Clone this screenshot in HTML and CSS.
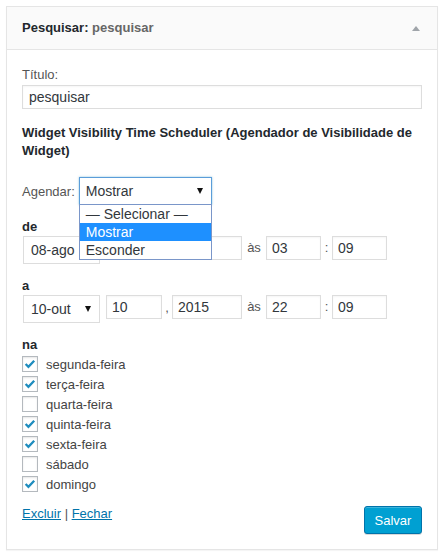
FILE: index.html
```html
<!DOCTYPE html>
<html lang="pt-BR">
<head>
<meta charset="utf-8">
<title>Widget</title>
<link rel="stylesheet" href="styles.css">
</head>
<body>
<div class="widget">
  <div class="widget-top">
    <h3 class="widget-title">Pesquisar:<span class="in-title"> pesquisar</span></h3>
    <span class="toggle"></span>
  </div>
  <div class="widget-inside">
    <label class="field-label">Título:</label>
    <input class="text-input wide" type="text" value="pesquisar">
    <h4 class="section-title">Widget Visibility Time Scheduler (Agendador de Visibilidade de Widget)</h4>

    <div class="schedule-row">
      <span class="muted-label">Agendar:</span>
      <div class="select-wrap">
        <div class="fake-select focused">Mostrar<span class="arrow"></span></div>
        <ul class="dropdown">
          <li>— Selecionar —</li>
          <li class="active">Mostrar</li>
          <li>Esconder</li>
        </ul>
      </div>
    </div>

    <div class="group-label">de</div>
    <div class="date-row">
      <div class="fake-select date-select">08-ago<span class="arrow"></span></div>
      <input class="text-input day" type="text" value="">
      <span class="sep comma">,</span>
      <input class="text-input year" type="text" value="">
      <span class="sep at">às</span>
      <input class="text-input time" type="text" value="03">
      <span class="sep colon">:</span>
      <input class="text-input time" type="text" value="09">
    </div>

    <div class="group-label">a</div>
    <div class="date-row">
      <div class="fake-select date-select">10-out<span class="arrow"></span></div>
      <input class="text-input day" type="text" value="10">
      <span class="sep comma">,</span>
      <input class="text-input year" type="text" value="2015">
      <span class="sep at">às</span>
      <input class="text-input time" type="text" value="22">
      <span class="sep colon">:</span>
      <input class="text-input time" type="text" value="09">
    </div>

    <div class="group-label">na</div>
    <ul class="days">
      <li><span class="cb checked"><svg viewBox="0 0 16 16"><polyline points="3,8 6.2,11.3 12.8,4.2"/></svg></span>segunda-feira</li>
      <li><span class="cb checked"><svg viewBox="0 0 16 16"><polyline points="3,8 6.2,11.3 12.8,4.2"/></svg></span>terça-feira</li>
      <li><span class="cb"></span>quarta-feira</li>
      <li><span class="cb checked"><svg viewBox="0 0 16 16"><polyline points="3,8 6.2,11.3 12.8,4.2"/></svg></span>quinta-feira</li>
      <li><span class="cb checked"><svg viewBox="0 0 16 16"><polyline points="3,8 6.2,11.3 12.8,4.2"/></svg></span>sexta-feira</li>
      <li><span class="cb"></span>sábado</li>
      <li><span class="cb checked"><svg viewBox="0 0 16 16"><polyline points="3,8 6.2,11.3 12.8,4.2"/></svg></span>domingo</li>
    </ul>

    <div class="widget-footer">
      <div class="links"><a href="#">Excluir</a> | <a href="#">Fechar</a></div>
      <button class="button-primary" type="button">Salvar</button>
    </div>
  </div>
</div>
</body>
</html>
```

FILE: styles.css
```css
html, body {
  margin: 0;
  background: #fff;
}
body {
  padding: 6px;
  font-family: "Liberation Sans", Arial, sans-serif;
  font-size: 13px;
  color: #444;
}
.widget {
  border: 1px solid #e5e5e5;
  background: #fff;
  box-shadow: 0 1px 1px rgba(0,0,0,.04);
}
.widget-top {
  height: 42px;
  background: #fafafa;
  border-bottom: 1px solid #e5e5e5;
  display: flex;
  align-items: center;
  justify-content: space-between;
  padding: 0 17px 0 15px;
}
.widget-title {
  margin: 0;
  font-size: 13px;
  font-weight: bold;
  color: #23282d;
  line-height: 16px;
}
.in-title {
  color: #666;
}
.toggle {
  width: 0;
  height: 0;
  border-left: 4px solid transparent;
  border-right: 4px solid transparent;
  border-bottom: 5px solid #a0a5aa;
}
.widget-inside {
  padding: 17px 15px 15px;
}
.field-label {
  display: block;
  line-height: 16px;
  color: #555;
}
.text-input {
  box-sizing: border-box;
  height: 24px;
  margin: 0;
  padding: 0 5px;
  border: 1px solid #ddd;
  background: #fff;
  font-family: "Liberation Sans", Arial, sans-serif;
  font-size: 14px;
  color: #32373c;
  outline: none;
  box-shadow: inset 0 1px 2px rgba(0,0,0,.04);
}
.text-input.wide {
  display: block;
  width: 100%;
  margin-top: 2px;
  padding-left: 6px;
}
.section-title {
  margin: 15px 0 0;
  font-size: 13px;
  font-weight: bold;
  line-height: 18px;
  color: #23282d;
}
.schedule-row {
  margin-top: 17px;
  display: flex;
  align-items: center;
  gap: 4px;
}
.muted-label {
  color: #555;
}
.select-wrap {
  position: relative;
}
.fake-select {
  box-sizing: border-box;
  height: 28px;
  border: 1px solid #ddd;
  background: #fff;
  font-size: 14px;
  color: #32373c;
  display: flex;
  align-items: center;
  justify-content: space-between;
  padding: 0 8px 0 6px;
}
.fake-select.focused {
  width: 133px;
  border-color: #5b9dd9;
  box-shadow: 0 0 2px rgba(30,140,190,.5);
}
.arrow {
  width: 0;
  height: 0;
  border-left: 3.5px solid transparent;
  border-right: 3.5px solid transparent;
  border-top: 6px solid #111;
}
.dropdown {
  position: absolute;
  left: 0;
  top: calc(100% - 1px);
  width: 133px;
  box-sizing: border-box;
  margin: 0;
  padding: 0;
  list-style: none;
  background: #fff;
  border: 1px solid #7a96c9;
  font-size: 14px;
  color: #32373c;
  z-index: 5;
}
.dropdown li {
  height: 18px;
  line-height: 18px;
  padding-left: 6px;
}
.dropdown li.active {
  background: #1e90ff;
  color: #fff;
}
.group-label {
  margin-top: 14px;
  line-height: 16px;
  font-weight: bold;
  color: #23282d;
}
.date-row {
  margin-top: 1px;
  display: flex;
  align-items: flex-start;
}
.date-select {
  width: 77px;
  margin-left: 1px;
  margin-right: 6px;
  padding-left: 7px;
}
.day { width: 56px; }
.year { width: 70px; }
.time { width: 55px; padding-left: 5px; }
.sep {
  height: 24px;
  line-height: 26px;
  text-align: center;
  color: #555;
}
.comma { width: 10px; }
.at { width: 24px; line-height: 24px; }
.colon { width: 11px; line-height: 24px; }
.days {
  margin: 1px 0 0;
  padding: 0;
  list-style: none;
}
.days li {
  height: 20px;
  display: flex;
  align-items: center;
  color: #444;
}
.cb {
  box-sizing: border-box;
  width: 16px;
  height: 16px;
  margin-right: 8px;
  border: 1px solid #b4b9be;
  background: #fff;
  box-shadow: inset 0 1px 2px rgba(0,0,0,.1);
  display: flex;
}
.cb svg {
  width: 14px;
  height: 14px;
  fill: none;
  stroke: #1e8cbe;
  stroke-width: 2.6;
}
.widget-footer {
  margin-top: 12px;
  display: flex;
  justify-content: space-between;
  align-items: flex-start;
}
.links {
  line-height: 16px;
  color: #555;
}
.links a {
  color: #0073aa;
  text-decoration: underline;
}
.button-primary {
  box-sizing: border-box;
  width: 58px;
  height: 28px;
  margin: 0;
  padding: 0;
  background: #00a0d2;
  border: 1px solid #0073aa;
  border-radius: 3px;
  box-shadow: inset 0 1px 0 rgba(120,200,230,.5), 0 1px 0 rgba(0,0,0,.15);
  color: #fff;
  font-family: "Liberation Sans", Arial, sans-serif;
  font-size: 13px;
  cursor: pointer;
}
```
